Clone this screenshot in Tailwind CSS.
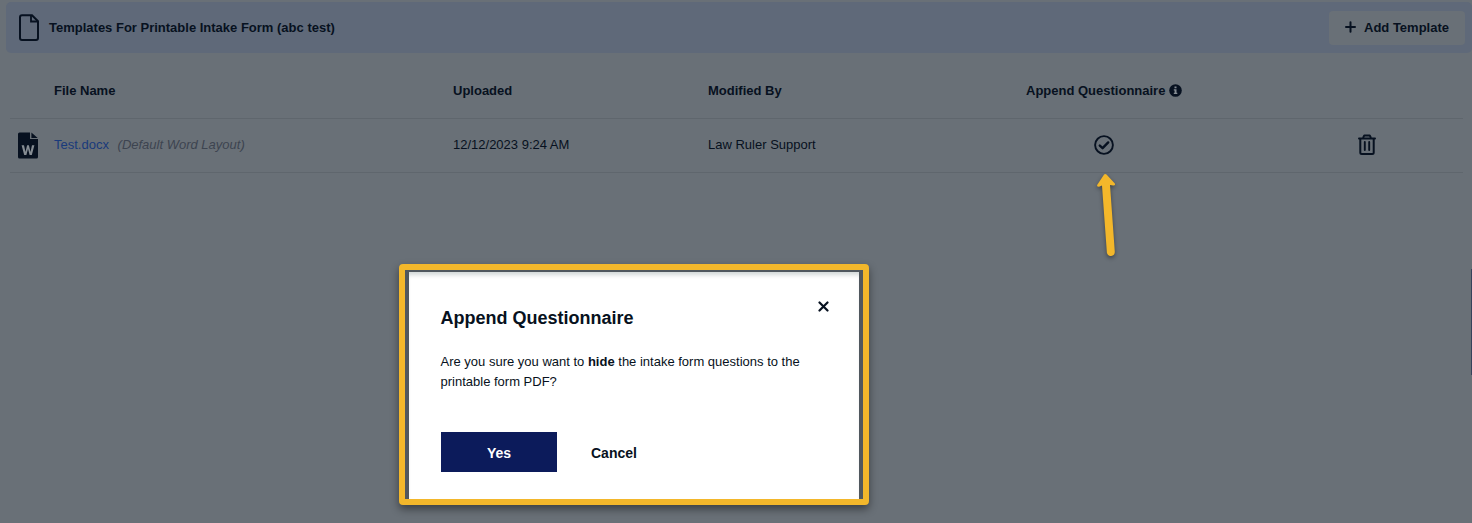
<!DOCTYPE html>
<html lang="en">
<head>
    <meta charset="UTF-8">
    <script src="https://cdn.jsdelivr.net/npm/@tailwindcss/browser@4"></script>
    <title>Printable Intake Form Templates</title>
</head>
<body class="relative h-[523px] overflow-hidden bg-[#697077] font-['Liberation_Sans',Arial,sans-serif] text-[13px] leading-5 text-[#071120]">

<!-- Title bar -->
<header class="mt-0.5 ml-1.5 flex h-[51px] items-center rounded-[5px] bg-[#5f6979] pr-[7px] pl-[13px]">
    <svg class="h-[27px] w-5 shrink-0" viewBox="0 0 20 27" fill="none" stroke="currentColor" stroke-width="2">
        <path d="M3 1.2H13L19 7.2V24Q19 26 17 26H3Q1 26 1 24V3.2Q1 1.2 3 1.2Z"/>
        <path d="M12 1V7.5H19" stroke-width="1.8"/>
    </svg>
    <h1 class="ml-2.5 font-bold">Templates For Printable Intake Form (abc test)</h1>
    <button class="ml-auto flex h-[34px] w-[136px] items-center rounded-[4px] bg-[#697077] pl-4 font-bold">
        <svg class="mr-2 mb-0.5 h-3 w-[11px]" viewBox="0 0 11 12" fill="none" stroke="currentColor" stroke-width="2" stroke-linecap="round">
            <path d="M5.5 1.3V10.7M1 6H10"/>
        </svg>
        Add Template
    </button>
</header>

<!-- Templates table -->
<main class="mr-[9px] ml-2.5">
    <div class="grid h-[66px] grid-cols-[44px_399px_255px_287px_1fr_139px] items-center border-b border-[#5f666d] pt-2.5 font-bold">
        <span></span>
        <span>File Name</span>
        <span>Uploaded</span>
        <span>Modified By</span>
        <span class="flex items-center pl-[31px]">Append Questionnaire
            <svg class="ml-1 size-[13px]" viewBox="0 0 13 13">
                <circle cx="6.5" cy="6.5" r="6.3" fill="currentColor"/>
                <path d="M5.5 2.5h2v1.7h-2zM4.8 5.3h2.7v3.5h.8v1.3H4.8V8.8h.8V6.5h-.8z" fill="#858c93"/>
            </svg>
        </span>
        <span></span>
    </div>
    <div class="grid h-[54px] grid-cols-[44px_399px_255px_287px_1fr_139px] items-center border-b border-[#5f666d] pb-0.5">
        <svg class="mt-0.5 ml-2 h-[27px] w-5" viewBox="0 0 20 27">
            <path d="M1.5 .5H12V7H20V25Q20 26.5 18.5 26.5H1.5Q0 26.5 0 25V2Q0 .5 1.5 .5ZM13.4 .5L19.7 6H13.4Z" fill="currentColor"/>
            <path d="M3.6 13.3H6L7.5 20L9.1 13.3H10.9L12.5 20L14 13.3H16.4L13.8 23H11.6L10 16.8L8.4 23H6.2Z" fill="#858c93"/>
        </svg>
        <span><a class="text-[#193a7b]">Test.docx</a> <i class="ml-[5px] text-[#3d4450]">(Default Word Layout)</i></span>
        <span>12/12/2023 9:24 AM</span>
        <span>Law Ruler Support</span>
        <svg class="ml-[99px] size-5" viewBox="0 0 20 20" fill="none" stroke="currentColor">
            <circle cx="10" cy="10" r="8.9" stroke-width="1.9"/>
            <path d="M5.8 10.6L8.6 13.2L14.2 7.4" stroke-width="2.4" stroke-linecap="round" stroke-linejoin="round"/>
        </svg>
        <svg class="ml-[33.5px] h-[21px] w-[18px]" viewBox="0 0 18 21" fill="none" stroke="currentColor" stroke-width="2" stroke-linejoin="round">
            <path d="M1 4.4H17" stroke-linecap="round"/>
            <path d="M5 4L6.3 1.4H11.7L13 4M2.3 4.5V18.5Q2.3 20 3.8 20H14.2Q15.7 20 15.7 18.5V4.5"/>
            <path d="M6.8 8V16M11.2 8V16" stroke-width="1.9" stroke-linecap="round"/>
        </svg>
    </div>
</main>

<!-- Arrow callout -->
<svg class="absolute top-[170px] left-[1090px] h-[94px] w-8 drop-shadow-[0_2px_2px_rgba(0,0,0,0.4)]" viewBox="0 0 32 94">
    <path d="M14.1 4.5Q15.2 3.4 16.5 4.6L24.6 13.3Q26 15.3 23.2 15.4L20 15L24.8 82A4 4 0 0 1 16.9 82.8L12 15.5L9 16.8Q6.4 16.8 7.3 14.7Z" fill="#f3b72b"/>
</svg>

<!-- Page scrollbar edge -->
<div class="absolute top-[269px] right-0 h-[106px] w-px bg-[#36435b]"></div>

<!-- Confirm dialog -->
<div class="absolute top-[264px] left-[399px] h-[241px] w-[470px] rounded-[4px] border-6 border-[#f3b72b] bg-[#50575e] px-1 pt-0.5 shadow-[0_4px_8px_rgba(0,0,0,0.45)]">
    <div class="relative h-full bg-white pr-8 pl-[31.5px] pt-[35px] shadow-[inset_0_5px_4px_-2px_#d3d8d8]">
        <button class="absolute top-[28.5px] right-[30px]">
            <svg class="size-[11px]" viewBox="0 0 11 11" fill="none" stroke="currentColor" stroke-width="2.2" stroke-linecap="round">
                <path d="M1.5 1.5L9.5 9.5M9.5 1.5L1.5 9.5"/>
            </svg>
        </button>
        <h2 class="text-lg leading-[22px] font-bold">Append Questionnaire</h2>
        <p class="mt-[23px] w-[370px]">Are you sure you want to <b>hide</b> the intake form questions to the printable form PDF?</p>
        <div class="mt-10 ml-[0.5px] flex items-center text-sm font-bold">
            <button class="h-10 w-[116px] bg-[#0c1b5b] pt-0.5 text-white">Yes</button>
            <button class="ml-[34px] pt-0.5">Cancel</button>
        </div>
    </div>
</div>

</body>
</html>
